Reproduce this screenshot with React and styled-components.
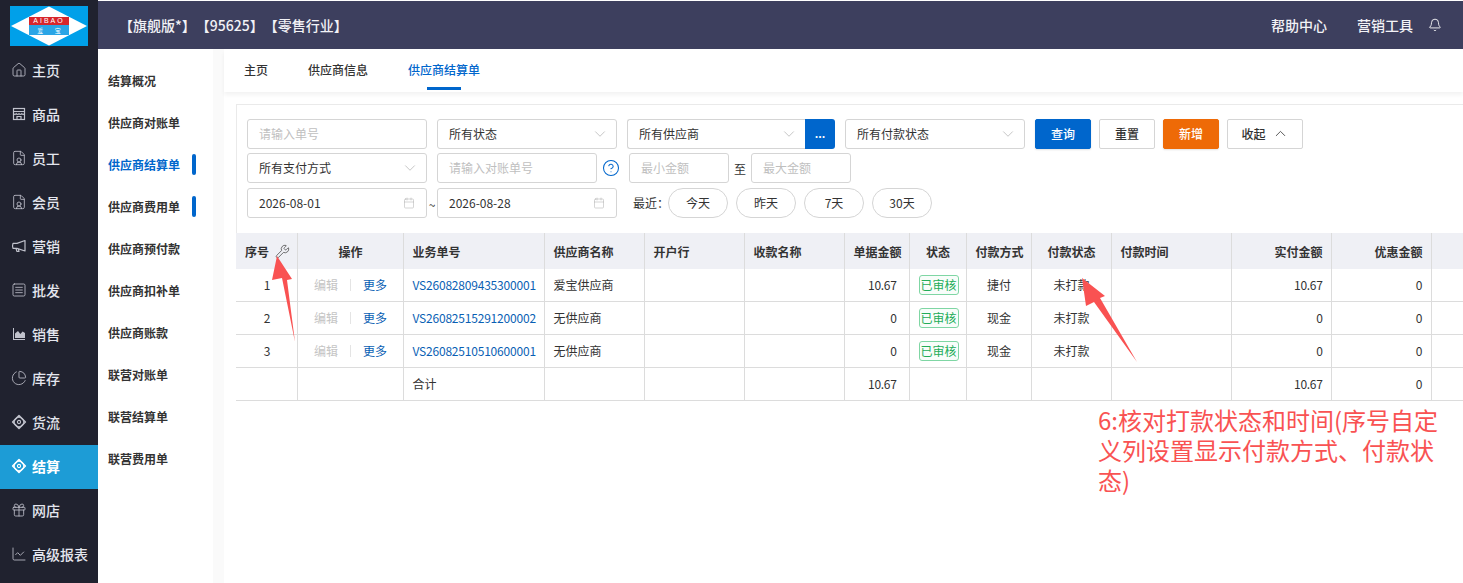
import styled, { createGlobalStyle } from "styled-components";
import {
  Bell, Calendar, ChartLine, ChartPie, ChevronDown, ChevronUp, CircleHelp,
  FileUser, Gift, House, SquareMenu, Wrench,
} from "lucide-react";

const GlobalStyle = createGlobalStyle`
  html, body {
    margin: 0;
    height: 100%;
    overflow: hidden;
    background: #fff;
    font-family: "Noto Sans CJK SC", "Noto Sans", sans-serif;
    font-size: 12px;
    color: #333;
  }
  * { box-sizing: border-box; }
`;

const FlowIcon = () => (
  <svg width="16" height="16" viewBox="0 0 16 16" fill="none" stroke="currentColor">
    <path d="M8 1.6 14.4 8 8 14.4 1.6 8Z" strokeWidth="1.5" strokeLinejoin="round" />
    <circle cx="8" cy="8" r="4.8" strokeWidth="1.1" />
    <circle cx="8" cy="8" r="1.6" strokeWidth="1.1" />
  </svg>
);

const StoreIcon = () => (
  <svg width="16" height="16" viewBox="0 0 16 16" fill="none" stroke="currentColor" strokeWidth="1.2">
    <rect x="2.5" y="2.5" width="11" height="11" />
    <path d="M2.5 5.5h11M2.5 7.6c1 1 1.8 1 2.7 0 .9 1 1.8 1 2.8 0 .9 1 1.8 1 2.8 0 .9 1 1.7 1 2.7 0" />
    <path d="M6 13.5v-3h4v3" />
  </svg>
);

const HornIcon = () => (
  <svg width="16" height="16" viewBox="0 0 16 16" fill="none" stroke="currentColor" strokeWidth="1.2" strokeLinejoin="round">
    <path d="M14 2.5v10.5L6 10.4H2L1.5 8 2 5.4h4Z" />
    <path d="M5 10.5 6 13.5h2L7.4 11" />
  </svg>
);

const AreaIcon = () => (
  <svg width="16" height="16" viewBox="0 0 16 16">
    <path d="M2 2v12h12v-1H3V2Z" fill="currentColor" />
    <path d="M4 12V7.5L7 5l2.4 3 2.2-2.5 2.4 1.6V12Z" fill="currentColor" />
  </svg>
);

const navItems = [
  { label: "主页", Icon: House },
  { label: "商品", Icon: StoreIcon },
  { label: "员工", Icon: FileUser },
  { label: "会员", Icon: FileUser },
  { label: "营销", Icon: HornIcon },
  { label: "批发", Icon: SquareMenu },
  { label: "销售", Icon: AreaIcon },
  { label: "库存", Icon: ChartPie },
  { label: "货流", Icon: FlowIcon },
  { label: "结算", Icon: FlowIcon, active: true },
  { label: "网店", Icon: Gift },
  { label: "高级报表", Icon: ChartLine },
];

const subItems = [
  { label: "结算概况" },
  { label: "供应商对账单" },
  { label: "供应商结算单", active: true, mark: true },
  { label: "供应商费用单", mark: true },
  { label: "供应商预付款" },
  { label: "供应商扣补单" },
  { label: "供应商账款" },
  { label: "联营对账单" },
  { label: "联营结算单" },
  { label: "联营费用单" },
];

const columns = [
  { label: "序号", width: 61 },
  { label: "操作", width: 106, align: "center" },
  { label: "业务单号", width: 141 },
  { label: "供应商名称", width: 100 },
  { label: "开户行", width: 100 },
  { label: "收款名称", width: 100 },
  { label: "单据金额", width: 65, align: "right" },
  { label: "状态", width: 57, align: "center" },
  { label: "付款方式", width: 65, align: "center" },
  { label: "付款状态", width: 80, align: "center" },
  { label: "付款时间", width: 120 },
  { label: "实付金额", width: 100, align: "right" },
  { label: "优惠金额", width: 100, align: "right" },
  { label: "", width: 105 },
];

const rows = [
  { id: 1, no: "VS26082809435300001", supplier: "爱宝供应商", amount: "10.67", method: "捷付", paid: "10.67" },
  { id: 2, no: "VS26082515291200002", supplier: "无供应商", amount: "0", method: "现金", paid: "0" },
  { id: 3, no: "VS26082510510600001", supplier: "无供应商", amount: "0", method: "现金", paid: "0" },
];

export default function App() {
  return (
    <Page>
      <GlobalStyle />
      <Sidebar>
        <LogoWrap>
          <Logo>
            <LogoDiamond viewBox="0 0 78 40" preserveAspectRatio="none">
              <polygon points="1,20 39,0.5 77,20 39,39.5" fill="#fff" />
              <rect x="19" y="11" width="40" height="18" fill="#2aa5e6" />
            </LogoDiamond>
            <LogoBand>AIBAO</LogoBand>
            <LogoName>爱 宝</LogoName>
          </Logo>
        </LogoWrap>
        {navItems.map(({ label, Icon, active }) => (
          <NavItem key={label} $active={active}>
            <Icon size={16} strokeWidth={1.25} />
            <span>{label}</span>
          </NavItem>
        ))}
      </Sidebar>

      <Right>
        <TopBar>
          <Edition>
            <span>【旗舰版*】</span>
            <span>【95625】</span>
            <span>【零售行业】</span>
          </Edition>
          <TopLinks>
            <span>帮助中心</span>
            <span>营销工具</span>
            <Bell size={14} strokeWidth={1.5} />
          </TopLinks>
        </TopBar>

        <Body>
          <SubNav>
            {subItems.map((item) => (
              <SubItem key={item.label} $active={item.active} $mark={item.mark}>{item.label}</SubItem>
            ))}
          </SubNav>

          <Main>
            <Tabs>
              <Tab>主页</Tab>
              <Tab>供应商信息</Tab>
              <Tab $active>供应商结算单</Tab>
            </Tabs>

            <Panel>
              <FilterRow>
                <TextField $w={180}>请输入单号</TextField>
                <SelectField $w={180}>所有状态<ChevronDown size={18} strokeWidth={0.9} /></SelectField>
                <SupplierGroup>
                  <SelectField $w={178} $joined>所有供应商<ChevronDown size={18} strokeWidth={0.9} /></SelectField>
                  <MoreButton>...</MoreButton>
                </SupplierGroup>
                <SelectField $w={180}>所有付款状态<ChevronDown size={18} strokeWidth={0.9} /></SelectField>
                <Button $variant="primary">查询</Button>
                <Button>重置</Button>
                <Button $variant="orange">新增</Button>
                <CollapseButton>收起<ChevronUp size={17} strokeWidth={1.25} /></CollapseButton>
              </FilterRow>

              <FilterRow>
                <SelectField $w={180}>所有支付方式<ChevronDown size={18} strokeWidth={0.9} /></SelectField>
                <TextField $w={160}>请输入对账单号</TextField>
                <HelpIcon size={18} strokeWidth={1.4} />
                <AmountRange>
                  <TextField $w={100}>最小金额</TextField>
                  <span>至</span>
                  <TextField $w={100}>最大金额</TextField>
                </AmountRange>
              </FilterRow>

              <FilterRow $third>
                <DateField>2026-08-01<Calendar size={12} strokeWidth={1} /></DateField>
                <Tilde>~</Tilde>
                <DateField>2026-08-28<Calendar size={12} strokeWidth={1} /></DateField>
                <Recent>最近：</Recent>
                <Pills>
                  <Pill>今天</Pill>
                  <Pill>昨天</Pill>
                  <Pill>7天</Pill>
                  <Pill>30天</Pill>
                </Pills>
              </FilterRow>
            </Panel>

            <Table>
              <colgroup>
                {columns.map((c, i) => <col key={i} width={c.width} />)}
              </colgroup>
              <thead>
                <tr>
                  {columns.map((c, i) => (
                    <Th key={i} $align={c.align}>
                      {c.label}
                      {i === 0 && <SetIcon size={15} strokeWidth={1.2} />}
                    </Th>
                  ))}
                </tr>
              </thead>
              <tbody>
                {rows.map((r) => (
                  <tr key={r.id}>
                    <Td $align="right" $pad={26}>{r.id}</Td>
                    <Td $align="center">
                      <ActionGroup>
                        <Disabled>编辑</Disabled>
                        <Divider />
                        <BlueText>更多</BlueText>
                      </ActionGroup>
                    </Td>
                    <Td><OrderNo>{r.no}</OrderNo></Td>
                    <Td>{r.supplier}</Td>
                    <Td />
                    <Td />
                    <Td $align="right" $pad={12} $tight>{r.amount}</Td>
                    <Td $align="center"><Badge>已审核</Badge></Td>
                    <Td $align="center">{r.method}</Td>
                    <Td $align="center">未打款</Td>
                    <Td />
                    <Td $align="right" $tight>{r.paid}</Td>
                    <Td $align="right">0</Td>
                    <Td />
                  </tr>
                ))}
                <tr>
                  <Td />
                  <Td />
                  <Td>合计</Td>
                  <Td />
                  <Td />
                  <Td />
                  <Td $align="right" $pad={12} $tight>10.67</Td>
                  <Td />
                  <Td />
                  <Td />
                  <Td />
                  <Td $align="right" $tight>10.67</Td>
                  <Td $align="right">0</Td>
                  <Td />
                </tr>
              </tbody>
            </Table>
          </Main>
        </Body>
      </Right>

      <ArrowLayer viewBox="0 0 1463 583">
        <polygon points="277,256 292,279 287,280 295,342 282,278 272,280" fill="#f95252" />
        <polygon points="1082,278 1105,296 1100,298 1137,362 1094,302 1086,306" fill="#f95252" />
      </ArrowLayer>
      <Note>6:核对打款状态和时间(序号自定义列设置显示付款方式、付款状态)</Note>
    </Page>
  );
}

const Page = styled.div`
  position: relative;
  display: flex;
  width: 1463px;
  height: 583px;
  overflow: hidden;
`;

const Sidebar = styled.aside`
  flex: 0 0 98px;
  background: #20222f;
`;

const LogoWrap = styled.div`
  height: 49px;
  padding: 6px 10px 3px;
`;

const Logo = styled.div`
  position: relative;
  width: 78px;
  height: 40px;
  background: #00a0e9;
`;

const LogoDiamond = styled.svg`
  position: absolute;
  inset: 0;
  width: 100%;
  height: 100%;
`;

const LogoBand = styled.div`
  position: absolute;
  left: 19px;
  top: 11px;
  width: 40px;
  height: 8px;
  background: #d8262c;
  color: #fff;
  font: 7px/8px "Liberation Sans", sans-serif;
  letter-spacing: 2px;
  text-align: center;
`;

const LogoName = styled.div`
  position: absolute;
  left: 19px;
  top: 20px;
  width: 40px;
  color: #fff;
  font-size: 6px;
  line-height: 9px;
  word-spacing: 10px;
  text-align: center;
`;

const NavItem = styled.div`
  display: flex;
  align-items: center;
  gap: 5px;
  height: 44px;
  padding: 0 0 2px 11px;
  background: ${(p) => (p.$active ? "#1d9cd6" : "transparent")};
  color: ${(p) => (p.$active ? "#fff" : "#e4e6ee")};
  font-size: 14px;
  font-weight: ${(p) => (p.$active ? 700 : 500)};

  svg {
    flex: none;
    color: ${(p) => (p.$active ? "#fff" : "#c0c2cc")};
  }
`;

const Right = styled.div`
  flex: 1;
  min-width: 0;
  display: flex;
  flex-direction: column;
`;

const TopBar = styled.header`
  flex: 0 0 48px;
  margin-top: 1px;
  display: flex;
  align-items: center;
  justify-content: space-between;
  padding: 0 21px 1px 21px;
  background: #3d3f5e;
  color: #f2f2f6;
  font-size: 14px;
  font-weight: 500;
`;

const Edition = styled.div`
  display: flex;
  white-space: nowrap;
`;

const TopLinks = styled.div`
  display: flex;
  align-items: center;
  gap: 30px;
  svg {
    margin-left: -15px;
    color: #fff;
  }
`;

const Body = styled.div`
  flex: 1;
  min-height: 0;
  display: flex;
`;

const SubNav = styled.nav`
  flex: 0 0 115px;
  padding-top: 10px;
  background: #fff;
`;

const SubItem = styled.div`
  position: relative;
  height: 42px;
  padding-left: 10px;
  display: flex;
  align-items: center;
  color: ${(p) => (p.$active ? "#0066cc" : "#333")};
  font-weight: 700;
  font-size: 12px;

  ${(p) => p.$mark && `
    &::after {
      content: "";
      position: absolute;
      left: 94px;
      top: 11px;
      width: 4px;
      height: 21px;
      border-radius: 2px;
      background: #0066cc;
    }
  `}
`;

const Main = styled.main`
  flex: 1;
  min-width: 0;
  padding-left: 11px;
  background: linear-gradient(to right, #fafafa 11px, #fff 11px);
`;

const Tabs = styled.div`
  display: flex;
  gap: 40px;
  height: 42px;
  margin-top: 1px;
  padding: 0 0 0 20px;
  background: #fff;
  box-shadow: 0 3px 4px rgba(0, 0, 0, 0.05);
`;

const Tab = styled.div`
  display: flex;
  align-items: center;
  padding-top: 1px;
  color: ${(p) => (p.$active ? "#0066cc" : "#333")};
  font-weight: 500;
  border-bottom: 3px solid ${(p) => (p.$active ? "#0066cc" : "transparent")};
  border-image: ${(p) => (p.$active ? "linear-gradient(to right, transparent 19px, #0066cc 19px, #0066cc 53px, transparent 53px) 1" : "none")};
  height: 40px;
`;

const Panel = styled.section`
  margin: 12px 0 0 12px;
  padding: 14px 10px 0;
  height: 129px;
  border-top: 1px solid #eaeaea;
  border-left: 1px solid #eaeaea;
  background: #fff;
`;

const FilterRow = styled.div`
  display: flex;
  align-items: center;
  gap: 10px;
  height: 30px;
  margin-bottom: ${(p) => (p.$third ? 0 : "4px")};
  margin-top: ${(p) => (p.$third ? "5px" : 0)};
  white-space: nowrap;
`;

const fieldBox = `
  height: 30px;
  display: flex;
  align-items: center;
  border: 1px solid #d5d5d5;
  border-radius: 3px;
  background: #fff;
`;

const TextField = styled.div`
  ${fieldBox}
  flex: none;
  width: ${(p) => p.$w}px;
  padding: 0 0 1px 11px;
  color: #bfbfbf;
`;

const SelectField = styled.div`
  ${fieldBox}
  flex: none;
  width: ${(p) => p.$w}px;
  justify-content: space-between;
  padding: 0 7px 1px 11px;
  color: #333;
  ${(p) => p.$joined && "border-radius: 3px 0 0 3px; border-right: 0;"}
  svg { color: #aaa; }
`;

const SupplierGroup = styled.div`
  display: flex;
`;

const MoreButton = styled.div`
  width: 30px;
  height: 30px;
  display: flex;
  align-items: center;
  justify-content: center;
  padding-bottom: 3px;
  border-radius: 0 3px 3px 0;
  background: #0066cc;
  color: #fff;
  font-size: 11px;
  font-weight: 700;
`;

const variants = {
  primary: "background: #0066cc; border-color: #0066cc; color: #fff; box-shadow: 0 1px 2px rgba(0,0,0,.12);",
  orange: "background: #ee6a07; border-color: #ee6a07; color: #fff; box-shadow: 0 1px 2px rgba(0,0,0,.12);",
};

const Button = styled.div`
  flex: none;
  width: 56px;
  height: 30px;
  margin-right: -2px;
  padding-bottom: 1px;
  display: flex;
  align-items: center;
  justify-content: center;
  border: 1px solid #d5d5d5;
  border-radius: 2px;
  font-weight: 500;
  ${(p) => variants[p.$variant] || ""}
`;

const CollapseButton = styled(Button)`
  width: 76px;
  gap: 6px;
  svg { color: #444; }
`;

const HelpIcon = styled(CircleHelp)`
  flex: none;
  margin: 0 -1px 0 -5px;
  color: #0066cc;
`;

const AmountRange = styled.div`
  display: flex;
  align-items: center;
  gap: 5px;
  color: #333;
`;

const DateField = styled(SelectField)`
  width: 180px;
  padding: 0 11px 1px 11px;
`;

const Tilde = styled.span`
  margin: 0 -10px;
  width: 10px;
  text-align: center;
  position: relative;
  top: 1px;
`;

const Recent = styled.span`
  margin-left: 6px;
  padding-bottom: 1px;
`;

const Pills = styled.div`
  display: flex;
  gap: 8px;
  margin-left: -11px;
`;

const Pill = styled.div`
  width: 60px;
  height: 30px;
  padding-bottom: 1px;
  display: flex;
  align-items: center;
  justify-content: center;
  border: 1px solid #d5d5d5;
  border-radius: 15px;
`;

const Table = styled.table`
  margin: 0 0 0 12px;
  width: 1300px;
  table-layout: fixed;
  border-collapse: collapse;
  border-bottom: 1px solid #dcdcdc;

  tbody tr:first-child td {
    height: 32px;
  }
`;

const Th = styled.th`
  position: relative;
  height: 36px;
  padding: 1px 8px 0 9px;
  background: #eff0f5;
  font-weight: 700;
  font-size: 12px;
  color: #333;
  white-space: nowrap;
  text-align: ${(p) => p.$align || "left"};
  border-right: 1px solid #dcdcdc;
`;

const SetIcon = styled(Wrench)`
  position: absolute;
  right: 7px;
  top: 11px;
  color: #444;
`;

const Td = styled.td`
  height: 33px;
  padding: 0 ${(p) => p.$pad || 8}px 0 9px;
  color: #333;
  white-space: nowrap;
  text-align: ${(p) => p.$align || "left"};
  letter-spacing: ${(p) => (p.$tight ? "-0.3px" : "normal")};
  border-right: 1px solid #dcdcdc;
  border-bottom: 1px solid #dcdcdc;
`;

const ActionGroup = styled.div`
  display: flex;
  align-items: center;
  justify-content: center;
  gap: 12px;
`;

const Disabled = styled.span`
  color: #c4c4c4;
`;

const Divider = styled.i`
  width: 1px;
  height: 12px;
  background: #e4e4e4;
`;

const BlueText = styled.span`
  color: #0a5fb4;
`;

const OrderNo = styled(BlueText)`
  letter-spacing: -0.2px;
`;

const Badge = styled.span`
  display: inline-block;
  width: 40px;
  height: 20px;
  line-height: 18px;
  border: 1px solid #7fd6a4;
  border-radius: 3px;
  background: #f8fdfa;
  color: #22ac58;
  text-align: center;
  vertical-align: middle;
`;

const ArrowLayer = styled.svg`
  position: absolute;
  inset: 0;
  width: 1463px;
  height: 583px;
  pointer-events: none;
`;

const Note = styled.div`
  position: absolute;
  left: 1098px;
  top: 405px;
  width: 345px;
  color: #f95252;
  font-size: 24px;
  line-height: 30px;
`;
